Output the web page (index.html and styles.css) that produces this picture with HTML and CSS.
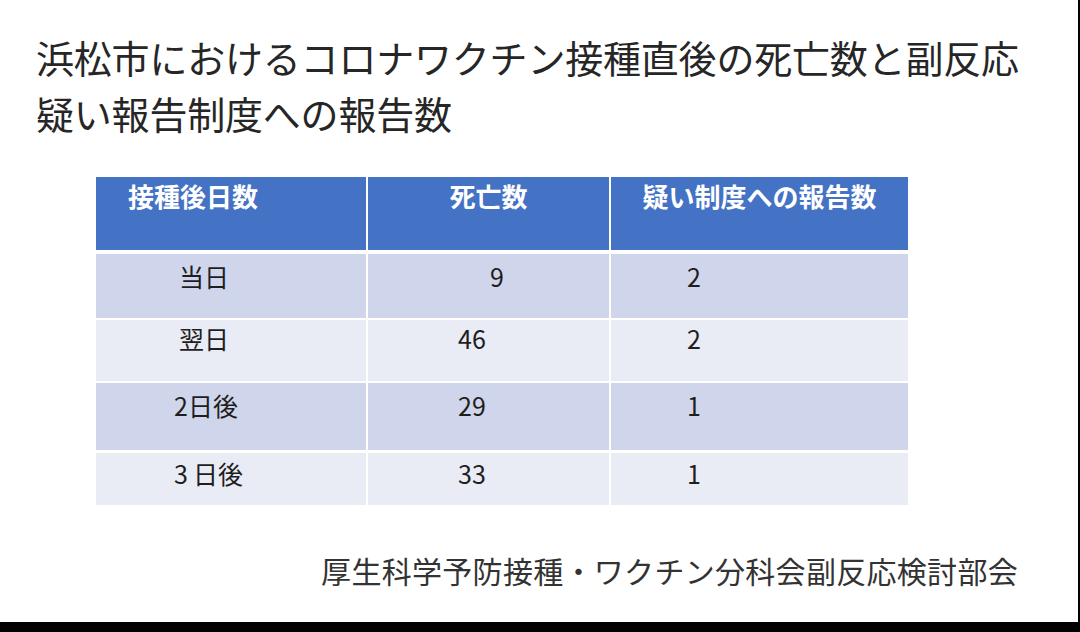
FILE: index.html
```html
<!DOCTYPE html>
<html lang="ja">
<head>
<meta charset="utf-8">
<title>浜松市におけるコロナワクチン接種直後の死亡数と副反応疑い報告制度への報告数</title>
<link rel="stylesheet" href="styles.css">
</head>
<body>
<div class="slide">
  <h1 class="title">浜松市におけるコロナワクチン接種直後の死亡数と副反応<br>疑い報告制度への報告数</h1>
  <div class="table">
    <div class="row head">
      <div class="cell c1">接種後日数</div>
      <div class="cell c2">死亡数</div>
      <div class="cell c3">疑い制度への報告数</div>
    </div>
    <div class="row odd r1">
      <div class="cell c1">当日</div>
      <div class="cell c2"><span class="indent">9</span></div>
      <div class="cell c3">2</div>
    </div>
    <div class="row even r2">
      <div class="cell c1">翌日</div>
      <div class="cell c2">46</div>
      <div class="cell c3">2</div>
    </div>
    <div class="row odd r3">
      <div class="cell c1 tight">2日後</div>
      <div class="cell c2">29</div>
      <div class="cell c3">1</div>
    </div>
    <div class="row even r4">
      <div class="cell c1 tight">3<span class="gap"></span>日後</div>
      <div class="cell c2">33</div>
      <div class="cell c3">1</div>
    </div>
  </div>
  <p class="source">厚生科学予防接種・ワクチン分科会副反応検討部会</p>
</div>
</body>
</html>
```

FILE: styles.css
```css
html, body {
  margin: 0;
  padding: 0;
  background: #000;
}
body {
  width: 1080px;
  height: 632px;
  overflow: hidden;
  font-family: "Noto Sans CJK JP", "Noto Sans", sans-serif;
}
.slide {
  width: 1078px;
  height: 622px;
  background: #fff;
  display: flex;
  flex-direction: column;
  box-sizing: border-box;
  padding-top: 29px;
}
.title {
  margin: 0 0 0 36px;
  font-size: 38px;
  line-height: 56px;
  font-weight: 400;
  color: #262626;
  letter-spacing: -0.2px;
}
.table {
  margin: 36px 0 0 96px;
  width: 812px;
  display: flex;
  flex-direction: column;
  gap: 2px;
}
.row {
  display: grid;
  grid-template-columns: 270px 241px 297px;
  column-gap: 2px;
}
.cell {
  box-sizing: border-box;
  font-size: 25px;
  line-height: 30px;
  color: #1e1e1e;
  padding-top: 7px;
}
.head { height: 73px; margin-bottom: 2px; }
.head .cell {
  background: #4472c4;
  color: #fff;
  font-weight: 700;
  font-size: 26px;
  line-height: 32px;
  padding-top: 3px;
}
.head .c1 { padding-left: 32px; }
.head .c2, .head .c3 { text-align: center; }
.r1 { height: 64px; }
.r2 { height: 61px; }
.r3 { height: 67px; margin-bottom: 1px; }
.r4 { height: 52px; }
.r2 .cell { padding-top: 3px; }
.r4 .cell { padding-top: 5px; }
.odd .cell { background: #cfd5ea; }
.even .cell { background: #e9ebf5; }
.row:not(.head) .c1 { padding-left: 83px; }
.row:not(.head) .c1.tight { padding-left: 78px; }
.row:not(.head) .c2 { padding-left: 90px; }
.row:not(.head) .c3 { padding-left: 76px; }
.indent { padding-left: 32px; }
.gap { display: inline-block; width: 5px; }
.source {
  margin: 47px 60px 0 0;
  text-align: right;
  font-size: 30px;
  line-height: 36px;
  color: #333;
  letter-spacing: 0.3px;
}
```
